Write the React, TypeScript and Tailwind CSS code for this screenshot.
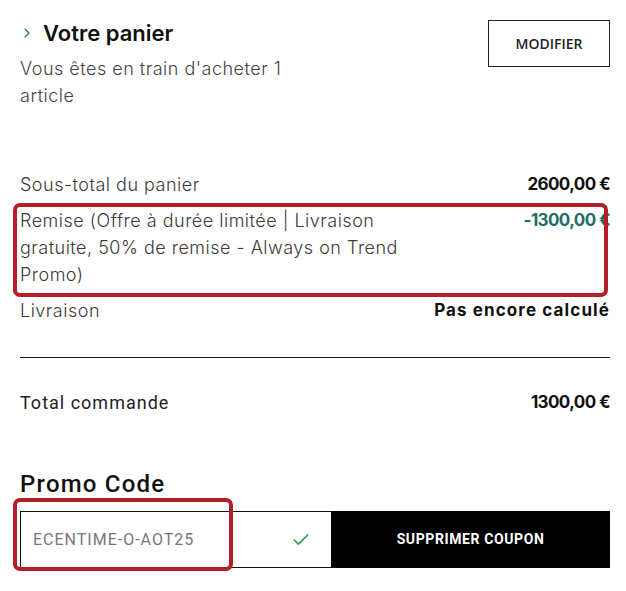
import { Check, ChevronRight } from 'lucide-react';

const rows = [
  { label: 'Sous-total du panier', value: '2600,00 €', tone: 'text-[#111] tracking-[-0.6px]' },
  {
    label: 'Remise (Offre à durée limitée | Livraison gratuite, 50% de remise - Always on Trend Promo)',
    value: '-1300,00 €',
    tone: 'text-[#1f6d67] tracking-[-0.6px]',
  },
  { label: 'Livraison', value: 'Pas encore calculé', tone: 'text-[#111] tracking-[1.1px]' },
];

export default function App() {
  return (
    <div className="relative w-[626px] h-[591px] overflow-hidden bg-white pl-[20px] pr-[16px] pt-[20px] font-['Roboto',sans-serif] text-[#3b3b3b]">
      <div className="flex justify-between items-start">
        <div>
          <div className="flex items-center h-[26px]">
            <ChevronRight className="w-[16px] h-[16px] -ml-[1px] mr-[8px] text-[#2c6e69]" strokeWidth={1.75} />
            <h1 className="font-['Inter',sans-serif] text-[22px] font-semibold text-[#111] leading-[26px]">
              Votre panier
            </h1>
          </div>
          <p className="mt-[9px] w-[300px] text-[18px] leading-[27px] tracking-[0.5px] font-['Inter',sans-serif] font-light text-[#444]">
            Vous êtes en train d'acheter 1 article
          </p>
        </div>
        <button className="w-[122px] h-[47px] border border-[#222] text-[14px] font-semibold text-[#222] font-['Open_Sans',sans-serif]">
          MODIFIER
        </button>
      </div>

      <div className="mt-[62px] flex flex-col gap-[9px]">
        {rows.map((row) => (
          <div key={row.label} className="flex justify-between items-start leading-[27px]">
            <span className="w-[405px] text-[18px] font-light tracking-[0.5px] font-['Inter',sans-serif]">{row.label}</span>
            <span className={`text-[17px] font-bold font-['Inter',sans-serif] ${row.tone}`}>{row.value}</span>
          </div>
        ))}
      </div>

      <div className="mt-[33px] border-t border-[#111]" />

      <div className="mt-[31px] flex justify-between leading-[27px]">
        <span className="text-[18px] tracking-[1px] text-[#222]">Total commande</span>
        <span className="text-[17px] font-bold font-['Inter',sans-serif] tracking-[-0.6px] text-[#111]">1300,00 €</span>
      </div>

      <h2 className="mt-[54px] text-[24px] font-medium tracking-[1.2px] leading-[28px] text-[#111]">Promo Code</h2>

      <div className="mt-[13px] flex h-[57px]">
        <div className="flex w-[311px] items-center justify-between border border-r-0 border-[#111] pl-[12px] pr-[20px]">
          <span className="text-[16px] tracking-[1px] text-[#777]">ECENTIME-O-AOT25</span>
          <Check className="w-[20px] h-[20px] text-[#2f9a52]" strokeWidth={2} />
        </div>
        <button className="flex-1 bg-black text-white text-[14px] font-bold tracking-[0.6px]">SUPPRIMER COUPON</button>
      </div>

      <div className="absolute left-[13px] top-[203px] w-[595px] h-[94px] rounded-[7px] border-[4px] border-[#b31e27]" />
      <div className="absolute left-[13px] top-[498px] w-[220px] h-[73px] rounded-[7px] border-[4px] border-[#b31e27]" />
    </div>
  );
}
